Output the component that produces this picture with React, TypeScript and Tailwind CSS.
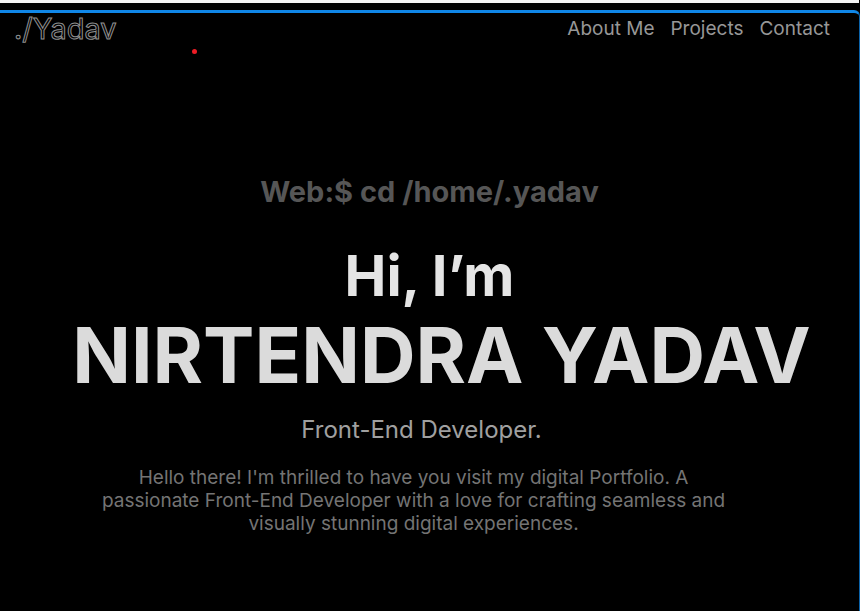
export default function App() {
  return (
    <div className="flex min-h-screen flex-col bg-black font-['Inter',sans-serif]">
      <div className="mr-px h-[10px] border-t-3 border-[#f4f4f4]" />
      <div className="relative flex grow flex-col rounded-tr-md border-t-3 border-r border-t-[#1087e8] border-r-[#0b62a8]">
        <span className="absolute left-[192px] top-9 size-[5px] rounded-full bg-[#ee1c25]" />
        <header className="flex h-8 items-center justify-between pl-[14px] pr-[29px] text-[19px] text-[#979797]">
          <a href="#home" className="text-[29px] leading-8 text-black [-webkit-text-stroke:1px_#909090]">./Yadav</a>
          <nav className="flex gap-4">
            <a href="#about">About Me</a>
            <a href="#projects">Projects</a>
            <a href="#contact">Contact</a>
          </nav>
        </header>
        <main className="flex flex-col items-center pt-[127px] text-center">
          <p className="text-[29px] font-bold leading-10 text-[#565656]">Web:$ cd /home/.yadav</p>
          <h1 className="mt-7 flex flex-col items-center font-bold">
            <span className="text-[56px] leading-[72px] text-[#e5e5e5]">Hi, I’m</span>
            <span className="whitespace-nowrap pl-6 text-[77px] leading-[86px] text-[#dbdbdb]">NIRTENDRA YADAV</span>
          </h1>
          <p className="mt-4 pr-4 text-[24px] leading-8 text-[#a0a0a0]">Front-End Developer.</p>
          <p className="mt-5 mr-8 max-w-[640px] text-[19px] leading-[23px] text-[#747474]">Hello there! I'm thrilled to have you visit my digital Portfolio. A passionate Front-End Developer with a love for crafting seamless and visually stunning digital experiences.</p>
        </main>
      </div>
    </div>
  );
}
